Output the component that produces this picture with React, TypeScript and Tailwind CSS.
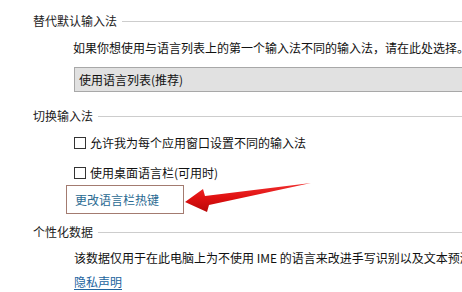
import React from "react";

const font = { fontFamily: '"Noto Sans CJK SC", "Noto Sans", sans-serif' };

function Heading({ text }: { text: string }) {
  return (
    <div className="flex items-center h-[14px] pl-[33px]">
      <span className="text-[12px] leading-[14px] text-[#222] whitespace-nowrap">{text}</span>
      <div className="flex-1 h-px bg-[#cdcdcd] ml-[5px]" />
    </div>
  );
}

function Check({ text }: { text: string }) {
  return (
    <div className="flex items-center h-[14px] pl-[74px]">
      <div className="w-[12px] h-[12px] border border-[#333] bg-white shrink-0" />
      <span className="ml-[4px] text-[12px] leading-[14px] text-[#111] whitespace-nowrap">{text}</span>
    </div>
  );
}

export default function App() {
  return (
    <div className="relative w-[462px] h-[292px] bg-white overflow-hidden" style={font}>
      <div className="flex flex-col">
        <div className="mt-[14px]">
          <Heading text="替代默认输入法" />
        </div>
        <div className="mt-[13px] h-[14px] pl-[73px] text-[12px] leading-[14px] text-[#111] whitespace-nowrap">
          如果你想使用与语言列表上的第一个输入法不同的输入法，请在此处选择。
        </div>
        <div className="mt-[12px] ml-[74px] mr-[-4px] h-[25px] bg-[#e1e1e1] border border-[#a8a8a8] flex items-center pl-[4px]">
          <span className="text-[12px] leading-[14px] text-[#111] whitespace-nowrap">使用语言列表(推荐)</span>
        </div>
        <div className="mt-[17px]">
          <Heading text="切换输入法" />
        </div>
        <div className="mt-[13px]">
          <Check text="允许我为每个应用窗口设置不同的输入法" />
        </div>
        <div className="mt-[16px]">
          <Check text="使用桌面语言栏(可用时)" />
        </div>
        <div className="mt-[5px] ml-[66px] w-[118px] h-[29px] border border-[#a37b70] flex items-center pl-[8px]">
          <span className="text-[12px] leading-[14px] text-[#2a6a92] whitespace-nowrap">更改语言栏热键</span>
        </div>
        <div className="mt-[11px]">
          <Heading text="个性化数据" />
        </div>
        <div className="mt-[12px] h-[14px] pl-[74px] text-[12px] leading-[14px] text-[#111] whitespace-nowrap">
          该数据仅用于在此电脑上为不使用 IME 的语言来改进手写识别以及文本预测结果。
        </div>
        <div className="mt-[3px] h-[14px] pl-[74px]">
          <span className="text-[12px] leading-[14px] text-[#22649e] underline underline-offset-2 whitespace-nowrap">隐私声明</span>
        </div>
      </div>
      <svg className="absolute left-0 top-0" width="462" height="292" viewBox="0 0 462 292">
        <defs>
          <linearGradient id="ar" x1="0" y1="0" x2="0" y2="1">
            <stop offset="0" stopColor="#f03030" />
            <stop offset="0.5" stopColor="#e01010" />
            <stop offset="1" stopColor="#b80808" />
          </linearGradient>
        </defs>
        <polygon
          points="185,202 203,189 205,196 311,183 209,205 207,212"
          fill="url(#ar)"
        />
      </svg>
    </div>
  );
}
